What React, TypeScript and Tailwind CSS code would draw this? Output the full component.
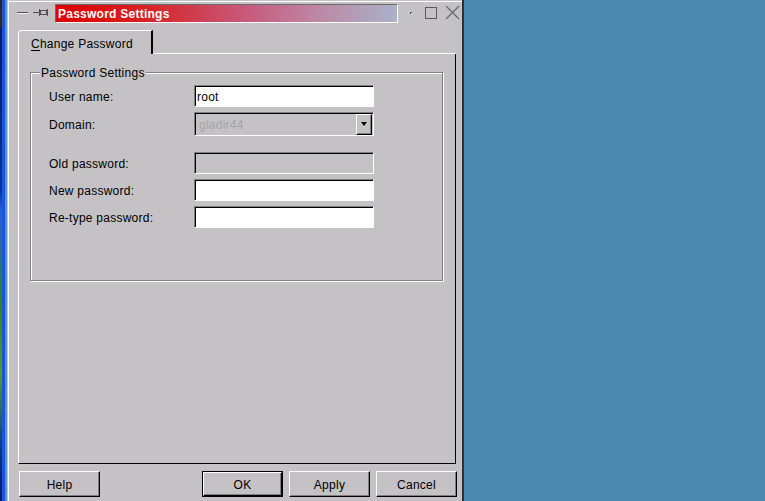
import React from "react"

const labelCls = "w-[145px] shrink-0 pt-[2px] leading-[14px]"
const sunken =
  "border border-t-[#808080] border-l-[#808080] border-r-white border-b-white shadow-[inset_1px_1px_0_#000]"
const raised =
  "border border-t-white border-l-white border-r-black border-b-black shadow-[inset_-1px_-1px_0_#808080]"

function Field({ label, value, disabled }: { label: string; value?: string; disabled?: boolean }) {
  return (
    <div className="flex items-center">
      <span className={labelCls}>{label}</span>
      <div
        className={`flex h-[22px] w-[180px] items-center pl-[2px] pt-[2px] ${sunken} ${
          disabled ? "bg-[#c4c2c5]" : "bg-white"
        }`}
      >
        {value}
      </div>
    </div>
  )
}

function Button({ label, isDefault }: { label: string; isDefault?: boolean }) {
  if (isDefault) {
    return (
      <div className="h-[26px] w-[81px] border border-black">
        <div className={`flex h-full w-full items-center justify-center pt-[2px] ${raised}`}>{label}</div>
      </div>
    )
  }
  return (
    <div className={`flex h-[26px] w-[81px] items-center justify-center pt-[2px] ${raised}`}>{label}</div>
  )
}

export default function App() {
  return (
    <div className="flex h-[501px] w-[765px] overflow-hidden font-['Liberation_Sans',Arial,sans-serif] text-[12px] tracking-[0.25px] text-black">
      {/* desktop edge */}
      <div className="flex w-[8px] shrink-0">
        <div className="w-[2px] bg-[linear-gradient(to_bottom,#2a2418_0%,#3a2a14_5%,#0a1a60_6%,#1030a0_38%,#2060e0_42%,#3a8020_60%,#5a9a20_75%,#10308a_90%,#0a1a60_100%)]" />
        <div className="w-[3px] bg-[#1a55dc]" />
        <div className="w-[2px] bg-[#5a90c8]" />
        <div className="w-[1px] bg-[#c4c2c5]" />
      </div>

      {/* window */}
      <div className="flex w-[456px] shrink-0 flex-col border-l border-r-2 border-l-white border-r-[#303030] bg-[#c4c2c5] pt-px">
        {/* title row */}
        <div className="flex h-[29px] border-t border-white">
          <svg width="46" height="28" className="shrink-0">
            <rect x="8" y="10" width="11" height="1" fill="#505050" />
            <rect x="8" y="11" width="11" height="1" fill="#f0f0f0" />
            <g stroke="#505050" strokeWidth="1" fill="none">
              <line x1="24" y1="10.5" x2="30" y2="10.5" />
              <line x1="30.5" y1="7" x2="30.5" y2="14" />
              <rect x="31.5" y="8.5" width="6" height="4" />
              <line x1="38.5" y1="7" x2="38.5" y2="14" />
            </g>
          </svg>
          <div className="mt-[2px] flex h-[19px] w-[343px] shrink-0 items-center border border-b-white border-l-[#6b6b6b] border-r-white border-t-[#6b6b6b] bg-[linear-gradient(to_right,#e00000_0%,#d82020_25%,#c8587a_55%,#bc8aa6_78%,#a9b2ca_100%)] pl-[2px] pt-px text-[12px] font-bold text-white">
            Password Settings
          </div>
          <svg width="64" height="28" className="shrink-0">
            <rect x="12" y="10" width="2" height="2" fill="#505050" />
            <rect x="13" y="11" width="1" height="1" fill="#f0f0f0" />
            <rect x="27.5" y="5.5" width="11" height="11" stroke="#5a5a5a" fill="none" />
            <g stroke="#6a6a6a" strokeWidth="1.3">
              <line x1="48" y1="4" x2="61" y2="17" />
              <line x1="61" y1="4" x2="48" y2="17" />
            </g>
          </svg>
        </div>

        {/* tab row */}
        <div className="ml-[9px] flex h-[24px] w-[438px]">
          <div className="flex h-full w-[135px] items-center rounded-tl-[4px] border-l border-r-2 border-t border-l-white border-r-black border-t-white pl-[12px] pt-[3px]">
            <span>
              <span className="underline underline-offset-2">C</span>hange Password
            </span>
          </div>
          <div className="flex-1 border-b border-white" />
        </div>

        {/* panel */}
        <div className="ml-[9px] h-[410px] w-[438px] border-b border-l border-r border-b-black border-l-white border-r-black">
          <div className="relative ml-[11px] mt-[18px] h-[209px] w-[413px] border border-[#808080] shadow-[inset_1px_1px_0_#fff,1px_1px_0_#fff]">
            <span className="absolute left-[9px] top-[-7px] bg-[#c4c2c5] px-[1px] leading-[14px]">
              Password Settings
            </span>
            <div className="flex flex-col pl-[18px] pt-[12px]">
              <Field label="User name:" value="root" />
              <div className="mt-[5px] flex items-center">
                <span className={labelCls}>Domain:</span>
                <div className={`flex h-[24px] w-[180px] items-center bg-[#c4c2c5] pl-[4px] pr-[1px] ${sunken}`}>
                  <span className="flex-1 pt-[2px] text-[#a6a4a8]">gladir44</span>
                  <div className={`flex h-[21px] w-[16px] items-center justify-center ${raised}`}>
                    <svg width="6" height="4">
                      <polygon points="0,0 6,0 3,4" fill="#000" />
                    </svg>
                  </div>
                </div>
              </div>
              <div className="mt-[16px]">
                <Field label="Old password:" disabled />
              </div>
              <div className="mt-[5px]">
                <Field label="New password:" />
              </div>
              <div className="mt-[5px]">
                <Field label="Re-type password:" />
              </div>
            </div>
          </div>
        </div>

        {/* buttons */}
        <div className="mt-[7px] flex">
          <div className="ml-[10px]">
            <Button label="Help" />
          </div>
          <div className="ml-[102px] flex gap-[6px]">
            <Button label="OK" isDefault />
            <Button label="Apply" />
            <Button label="Cancel" />
          </div>
        </div>
      </div>

      {/* desktop */}
      <div className="flex-1 bg-[#4a88b0]" />
    </div>
  )
}
